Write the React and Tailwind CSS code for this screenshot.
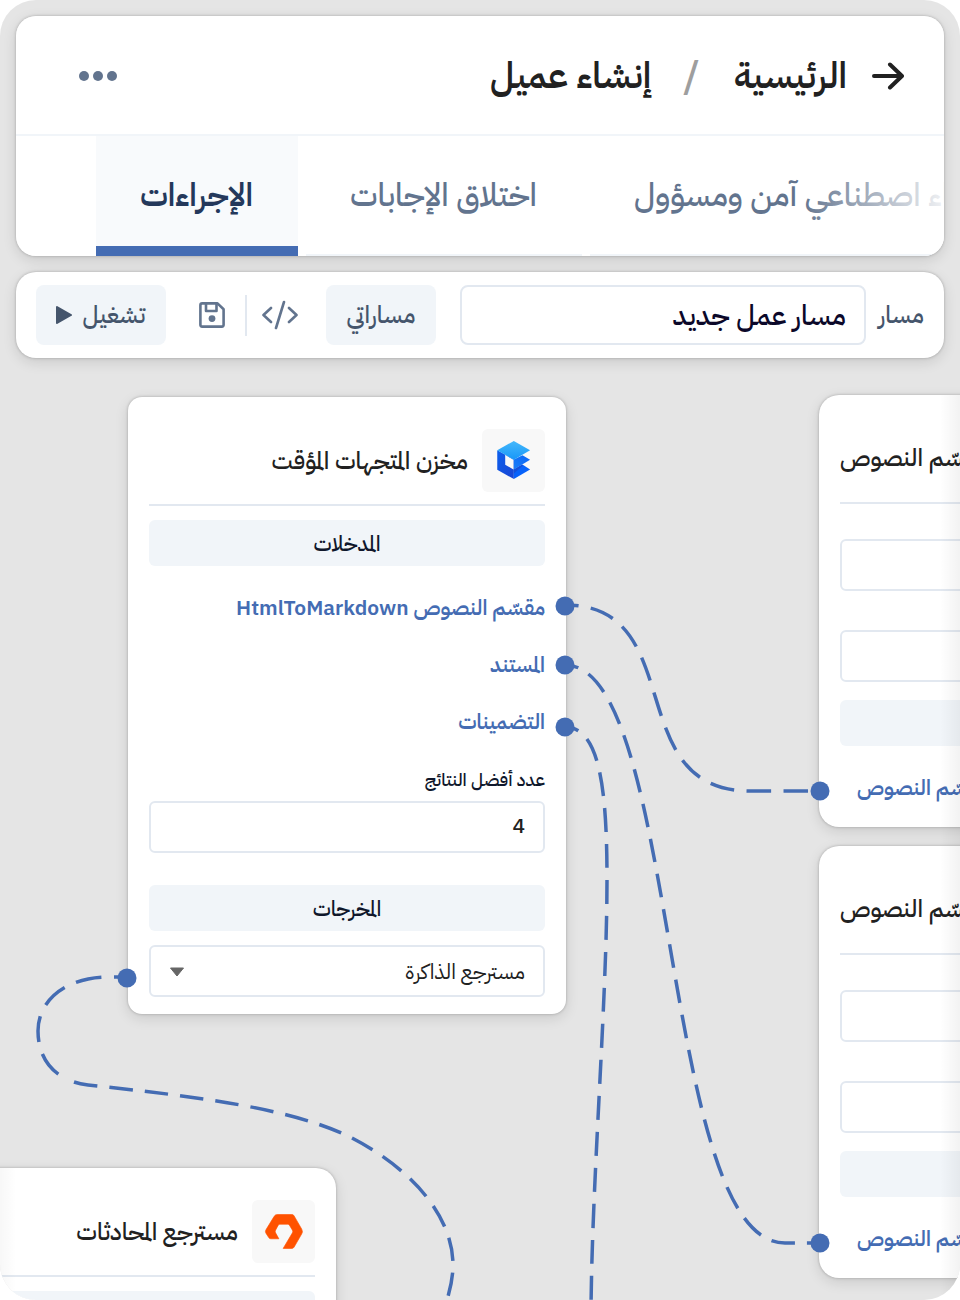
import React from "react";

const ports = [
  { id: "splitter", label: "مقسّم النصوص HtmlToMarkdown" },
  { id: "document", label: "المستند" },
  { id: "embeddings", label: "التضمينات" },
];

const connectors = [
  { d: "M565 605 C690 605 620 791 750 791 H820", dash: "24.5 12.4", offset: 11 },
  { d: "M565 665 C680 665 660 1243 785 1243 H820", dash: "23.7 12", offset: 10 },
  { d: "M565 727 C600 727 607 790 607 880 C607 1000 592 1180 591 1310", dash: "24 12", offset: 10 },
  { d: "M127 977 H110 C70 976 38 998 38 1031 C38 1055 50 1070 63 1077", dash: "26 12.5", offset: 13 },
  { d: "M74 1082 Q80 1084 88 1085 C190 1096 290 1107 352 1138 C410 1168 453 1215 453 1265 Q453 1280 447 1300", dash: "23.6 12", offset: 0 },
];

const handles = [
  [565, 606],
  [565, 665],
  [565, 727],
  [820, 791],
  [820, 1243],
  [127, 978],
];

const tabs = [
  { label: "ذكاء اصطناعي آمن ومسؤول", width: "w-[440px]" },
  { label: "اختلاق الإجابات", width: "w-[276px]" },
  { label: "الإجراءات", width: "w-[202px]", active: true },
];

function ArrowIcon() {
  return (
    <svg viewBox="0 0 32 28" className="h-7 w-8" fill="none" stroke="currentColor" strokeWidth="4" strokeLinecap="round" strokeLinejoin="round">
      <path d="M2 14H29M18 2.5L30 14L18 25.5" />
    </svg>
  );
}

function CodeIcon() {
  return (
    <svg viewBox="0 0 36 30" className="h-[30px] w-9" fill="none" stroke="currentColor" strokeWidth="2.6" strokeLinecap="round" strokeLinejoin="round">
      <path d="M9 8L1.5 15L9 22M27 8L34.5 15L27 22M22 2L14 28" />
    </svg>
  );
}

function SaveIcon() {
  return (
    <svg viewBox="0 0 26 26" className="size-[26px]" fill="none" stroke="currentColor" strokeWidth="2.6" strokeLinejoin="round">
      <path d="M3.2 1.4H18.5L24.6 7.2V22.8Q24.6 24.6 22.8 24.6H3.2Q1.4 24.6 1.4 22.8V3.2Q1.4 1.4 3.2 1.4Z" />
      <path d="M7 2V9H17.5V2" />
      <circle cx="13" cy="16.6" r="3.4" fill="currentColor" stroke="none" />
    </svg>
  );
}

function CubeLogo() {
  return (
    <svg viewBox="6 11 190 190" className="size-full">
      <defs>
        <linearGradient id="cubeTop" x1="0" y1="0" x2="0" y2="1">
          <stop offset="0" stopColor="#45b8fb" />
          <stop offset="1" stopColor="#1797f8" />
        </linearGradient>
        <linearGradient id="cubeLeft" x1="0" y1="0" x2="1" y2="1">
          <stop offset="0" stopColor="#0b5fee" />
          <stop offset="1" stopColor="#1b45d2" />
        </linearGradient>
        <linearGradient id="cubeFin" x1="0" y1="1" x2="1" y2="0">
          <stop offset="0" stopColor="#1a7ff8" />
          <stop offset="1" stopColor="#0a63f5" />
        </linearGradient>
      </defs>
      <path d="M52 75L102 103V162L52 134Z" fill="url(#cubeLeft)" />
      <path d="M102 103L128 90L151 104L102 133Z" fill="url(#cubeFin)" />
      <path d="M102 133L128 118L151 133L102 162Z" fill="#0762fa" />
      <path d="M102 133L126 119L130 121L102 145Z" fill="#1550d8" />
      <path d="M76 89L101 104V133L76 119Z" fill="#f8f8f8" />
      <path d="M102 47L151 75L102 104L52 75Z" fill="url(#cubeTop)" />
    </svg>
  );
}

function LoopLogo() {
  return (
    <svg viewBox="756 180 190 190" className="size-full">
      <path
        d="M832 224H876Q881 224 883 228L906 268Q910 275 906 282L883 322Q881 326 876 326H850L878 279Q880 275 878 271L869 256Q867 253 863 253H840Q837 253 835 256L827 271Q825 275 827 279L837 297H813Q809 297 807 294L798 280Q795 275 798 270L823 229Q826 224 832 224Z"
        fill="#ff5200"
        stroke="#ff5200"
        strokeWidth="2"
        strokeLinejoin="round"
      />
    </svg>
  );
}

function NodeHeader({ title, children }) {
  return (
    <div className="flex items-center gap-3.5 border-b-2 border-slate-200 pb-3">
      <div className="size-[63px] shrink-0 rounded-md bg-[#f8f8f8]">{children}</div>
      <h2 className="text-2xl font-medium text-[#212121]">{title}</h2>
    </div>
  );
}

function Band({ children }) {
  return (
    <div className="flex h-[46px] items-center justify-center rounded-md bg-slate-100 pt-1 text-[21px] font-medium text-slate-900">
      {children}
    </div>
  );
}

function VectorStoreNode() {
  return (
    <section className="absolute top-[397px] left-32 w-[438px] rounded-[14px] bg-white px-[21px] pt-8 pb-[17px] shadow-[0_0_3px_rgba(0,0,0,0.25),0_4px_14px_rgba(0,0,0,0.12)]">
      <NodeHeader title="مخزن المتجهات المؤقت">
        <CubeLogo />
      </NodeHeader>
      <div className="mt-3.5">
        <Band>المدخلات</Band>
      </div>
      <ul className="mt-3.5 text-[21px] font-semibold text-[#446cb3]">
        {ports.map((port) => (
          <li key={port.id} className="flex h-[57px] items-center whitespace-nowrap">
            {port.label}
          </li>
        ))}
      </ul>
      <label htmlFor="topK" className="mt-3.5 block text-lg/[30px] font-medium text-slate-900">
        عدد أفضل النتائج
      </label>
      <input
        id="topK"
        type="text"
        defaultValue="4"
        className="mt-1.5 block h-[52px] w-full rounded-md border-2 border-slate-200 px-[18px] pb-0.5 text-[21px] font-medium text-[#212121]"
      />
      <div className="mt-8">
        <Band>المخرجات</Band>
      </div>
      <div className="relative mt-3.5">
        <select
          aria-label="المخرجات"
          className="block h-[52px] w-full appearance-none rounded-md border-2 border-slate-200 bg-white px-[18px] pt-1 text-[21px] text-[#212121]"
        >
          <option>مسترجع الذاكرة</option>
        </select>
        <svg viewBox="0 0 16 10" className="pointer-events-none absolute top-[22px] left-5 h-2.5 w-4" fill="#666">
          <path d="M1.5 1H14.5L8 9Z" stroke="#666" strokeLinejoin="round" />
        </svg>
      </div>
    </section>
  );
}

function SplitterNode({ id, position }) {
  return (
    <section className={`absolute left-[819px] w-[438px] rounded-[20px] bg-white px-[21px] pt-8 pb-2.5 shadow-[0_0_3px_rgba(0,0,0,0.25),0_4px_14px_rgba(0,0,0,0.12)] ${position}`}>
      <div className="flex h-[77px] items-center justify-end border-b-2 border-slate-200 pb-3.5">
        <h2 className="text-2xl font-medium text-[#212121]">مقسّم النصوص</h2>
      </div>
      <input aria-label="حجم المقطع" id={`${id}-size`} className="mt-[35px] block h-[52px] w-full rounded-md border-2 border-slate-200" />
      <input aria-label="التداخل" id={`${id}-overlap`} className="mt-[39px] block h-[52px] w-full rounded-md border-2 border-slate-200" />
      <div className="mt-[18px]">
        <Band />
      </div>
      <p className="mt-3.5 flex h-[57px] items-center justify-end pl-[17px] text-[21px] font-semibold text-[#446cb3]">
        مقسّم النصوص
      </p>
    </section>
  );
}

function RetrieverNode() {
  return (
    <section className="absolute top-[1168px] -left-[102px] w-[438px] rounded-[20px] bg-white px-[21px] pt-8 pb-[17px] shadow-[0_0_3px_rgba(0,0,0,0.25),0_4px_14px_rgba(0,0,0,0.12)]">
      <NodeHeader title="مسترجع المحادثات">
        <LoopLogo />
      </NodeHeader>
      <div className="mt-3.5">
        <Band />
      </div>
    </section>
  );
}

function Canvas() {
  return (
    <div className="absolute inset-0 overflow-hidden">
      <VectorStoreNode />
      <SplitterNode id="splitter-a" position="top-[395px]" />
      <SplitterNode id="splitter-b" position="top-[846px]" />
      <RetrieverNode />
      <svg className="pointer-events-none absolute inset-0 size-full">
        {connectors.map((line) => (
          <path
            key={line.d}
            d={line.d}
            fill="none"
            stroke="#446cb3"
            strokeWidth="3.5"
            strokeDasharray={line.dash}
            strokeDashoffset={line.offset}
          />
        ))}
        {handles.map(([x, y]) => (
          <circle key={`${x}-${y}`} cx={x} cy={y} r="9.5" fill="#446cb3" />
        ))}
      </svg>
      <div className="pointer-events-none absolute top-[395px] right-0 bottom-0 w-5 bg-linear-to-l from-black/5 to-transparent" />
      <div className="pointer-events-none absolute top-[1168px] bottom-0 left-0 w-4 bg-linear-to-r from-black/3 to-transparent" />
    </div>
  );
}

function Header() {
  return (
    <header className="relative overflow-hidden rounded-[20px] bg-white">
      <div className="flex h-[120px] items-center border-b-2 border-slate-100 pt-0.5 pr-10 pl-[63px] text-[#212121]">
        <button type="button" aria-label="رجوع">
          <ArrowIcon />
        </button>
        <nav className="mr-[25px] flex items-center text-4xl font-semibold">
          <a href="#home">الرئيسية</a>
          <span className="mr-[34px] ml-8 text-[40px]/10 font-medium text-[#9e9e9e]">/</span>
          <a href="#create">إنشاء عميل</a>
        </nav>
        <button type="button" aria-label="المزيد" className="mr-auto flex gap-1">
          <span className="size-2.5 rounded-full bg-slate-500" />
          <span className="size-2.5 rounded-full bg-slate-500" />
          <span className="size-2.5 rounded-full bg-slate-500" />
        </button>
      </div>
      <div role="tablist" className="flex h-[120px] justify-end gap-2 pl-20">
        {tabs.map((tab) => (
          <button
            key={tab.label}
            type="button"
            role="tab"
            aria-selected={!!tab.active}
            className={`shrink-0 pr-[45px] pl-11 text-left text-[32px] whitespace-nowrap ${tab.width} ${
              tab.active
                ? "border-b-10 border-[#446cb3] bg-slate-50 pt-2 font-semibold text-[#24385b]"
                : "border-b-2 border-slate-100 font-medium text-slate-500"
            }`}
          >
            {tab.label}
          </button>
        ))}
      </div>
      <div className="pointer-events-none absolute right-0 bottom-0.5 h-[118px] w-36 bg-linear-to-l from-white/90 to-transparent" />
    </header>
  );
}

function Toolbar() {
  return (
    <div className="flex h-[86px] items-center rounded-[20px] bg-white px-5 text-slate-600 shadow-[0_0_3px_rgba(0,0,0,0.25),0_4px_14px_rgba(0,0,0,0.12)]">
      <label htmlFor="flowName" className="w-[46px] shrink-0 text-2xl font-medium whitespace-nowrap">
        مسار
      </label>
      <input
        id="flowName"
        type="text"
        defaultValue="مسار عمل جديد"
        className="mr-3 h-[60px] min-w-0 flex-1 rounded-lg border-2 border-slate-200 px-[18px] pt-0.5 text-[28px] font-medium text-[#0b0829]"
      />
      <button type="button" className="mr-6 h-[60px] w-[110px] shrink-0 rounded-lg bg-slate-100 text-2xl font-medium">
        مساراتي
      </button>
      <button type="button" aria-label="عرض الشيفرة" className="mr-7 shrink-0 text-slate-500">
        <CodeIcon />
      </button>
      <div className="mr-[15px] h-[41px] w-0.5 shrink-0 bg-slate-200" />
      <button type="button" aria-label="حفظ" className="mr-5 shrink-0 text-slate-500">
        <SaveIcon />
      </button>
      <button type="button" className="mr-[33px] flex h-[60px] w-[130px] shrink-0 items-center justify-center gap-2.5 rounded-lg bg-slate-100 text-2xl font-medium">
        تشغيل
        <svg viewBox="0 0 16 18" className="h-[18px] w-4" fill="currentColor" stroke="currentColor" strokeWidth="2" strokeLinejoin="round">
          <path d="M1 1L15 9L1 17Z" />
        </svg>
      </button>
    </div>
  );
}

export default function App() {
  return (
    <div className="min-h-screen bg-white">
      <main
        dir="rtl"
        className="relative h-screen overflow-hidden rounded-[36px] bg-[#e5e5e5] p-4 font-['IBM_Plex_Sans_Arabic','Noto_Sans_Arabic','Noto_Sans','DejaVu_Sans',sans-serif] [font-variant-ligatures:common-ligatures_discretionary-ligatures]"
      >
        <Canvas />
        <div className="relative flex flex-col gap-4">
          <div className="rounded-[20px] shadow-[0_0_3px_rgba(0,0,0,0.25),0_4px_14px_rgba(0,0,0,0.12)]">
            <Header />
          </div>
          <Toolbar />
        </div>
      </main>
    </div>
  );
}
